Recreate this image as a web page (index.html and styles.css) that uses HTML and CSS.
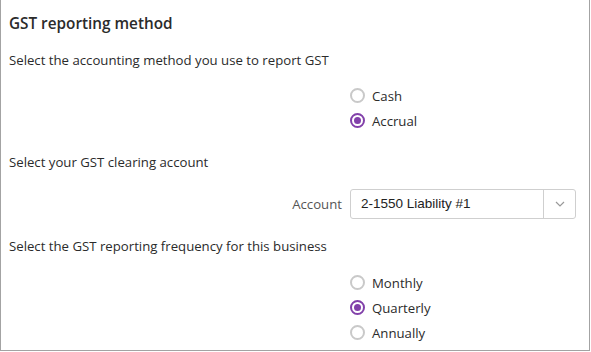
FILE: index.html
```html
<!DOCTYPE html>
<html lang="en">
<head>
  <meta charset="UTF-8" />
  <title>GST reporting method</title>
  <link rel="stylesheet" href="styles.css">
</head>
<body>

<div class="panel">
  <h2>GST reporting method</h2>

  <p class="question q-first">Select the accounting method you use to report GST</p>
  <div class="field">
    <div class="field-label"></div>
    <div class="radios">
      <label class="radio"><span class="dot"></span>Cash</label>
      <label class="radio checked"><span class="dot"></span>Accrual</label>
    </div>
  </div>

  <p class="question">Select your GST clearing account</p>
  <div class="field field-select">
    <div class="field-label">Account</div>
    <div class="select">
      <span class="select-value">2-1550 Liability #1</span>
      <span class="select-btn">
        <svg width="10" height="6" viewBox="0 0 10 6"><path d="M1 1l4 4 4-4" fill="none" stroke="#999" stroke-width="1.2"/></svg>
      </span>
    </div>
  </div>

  <p class="question q-freq">Select the GST reporting frequency for this business</p>
  <div class="field field-last">
    <div class="field-label"></div>
    <div class="radios">
      <label class="radio"><span class="dot"></span>Monthly</label>
      <label class="radio checked"><span class="dot"></span>Quarterly</label>
      <label class="radio"><span class="dot"></span>Annually</label>
    </div>
  </div>
</div>

</body>
</html>
```

FILE: styles.css
```css
body {
  margin: 0;
  font-family: "Open Sans", "Noto Sans", sans-serif;
  color: #2b2b2b;
  background: #fff;
}

.panel {
  width: 590px;
  height: 351px;
  box-sizing: border-box;
  border: 1px solid #a3a3a3;
  border-top: none;
  padding: 13px 0 0 8px;
}

h2 {
  margin: 0;
  font-size: 15.3px;
  font-weight: 600;
  line-height: 20px;
  color: #2b2b2b;
}

.question {
  margin: 16px 0 0;
  font-size: 13.2px;
  line-height: 20px;
}

.q-first {
  margin-top: 17px;
}

.q-freq {
  margin-top: 17px;
}

.field {
  display: grid;
  grid-template-columns: 333px 226px;
  column-gap: 8px;
  margin-top: 13px;
  margin-bottom: 19px;
}

.field-select {
  align-items: center;
  margin-top: 17px;
  margin-bottom: 0;
}

.field-last {
  margin-top: 14px;
}

.field-label {
  text-align: right;
  font-size: 13.2px;
  color: #555;
}

.radios {
  display: flex;
  flex-direction: column;
}

.radio {
  display: flex;
  align-items: center;
  height: 25px;
  font-size: 13.2px;
  color: #2b2b2b;
}

.dot {
  width: 15px;
  height: 15px;
  box-sizing: border-box;
  border: 2px solid #c9c9c9;
  border-radius: 50%;
  margin-right: 7px;
  position: relative;
}

.checked .dot {
  border-color: #8241aa;
}

.checked .dot::after {
  content: "";
  position: absolute;
  left: 2px;
  top: 2px;
  width: 7px;
  height: 7px;
  border-radius: 50%;
  background: #8241aa;
}

.select {
  display: flex;
  height: 30px;
  box-sizing: border-box;
  border: 1px solid #cfcfcf;
  border-radius: 3px;
}

.select-value {
  flex: 1;
  padding-left: 10px;
  line-height: 28px;
  font-family: "Liberation Sans", Arial, sans-serif;
  font-size: 13.5px;
  color: #222;
}

.select-btn {
  width: 31px;
  border-left: 1px solid #cfcfcf;
  display: flex;
  align-items: center;
  justify-content: center;
}
```
